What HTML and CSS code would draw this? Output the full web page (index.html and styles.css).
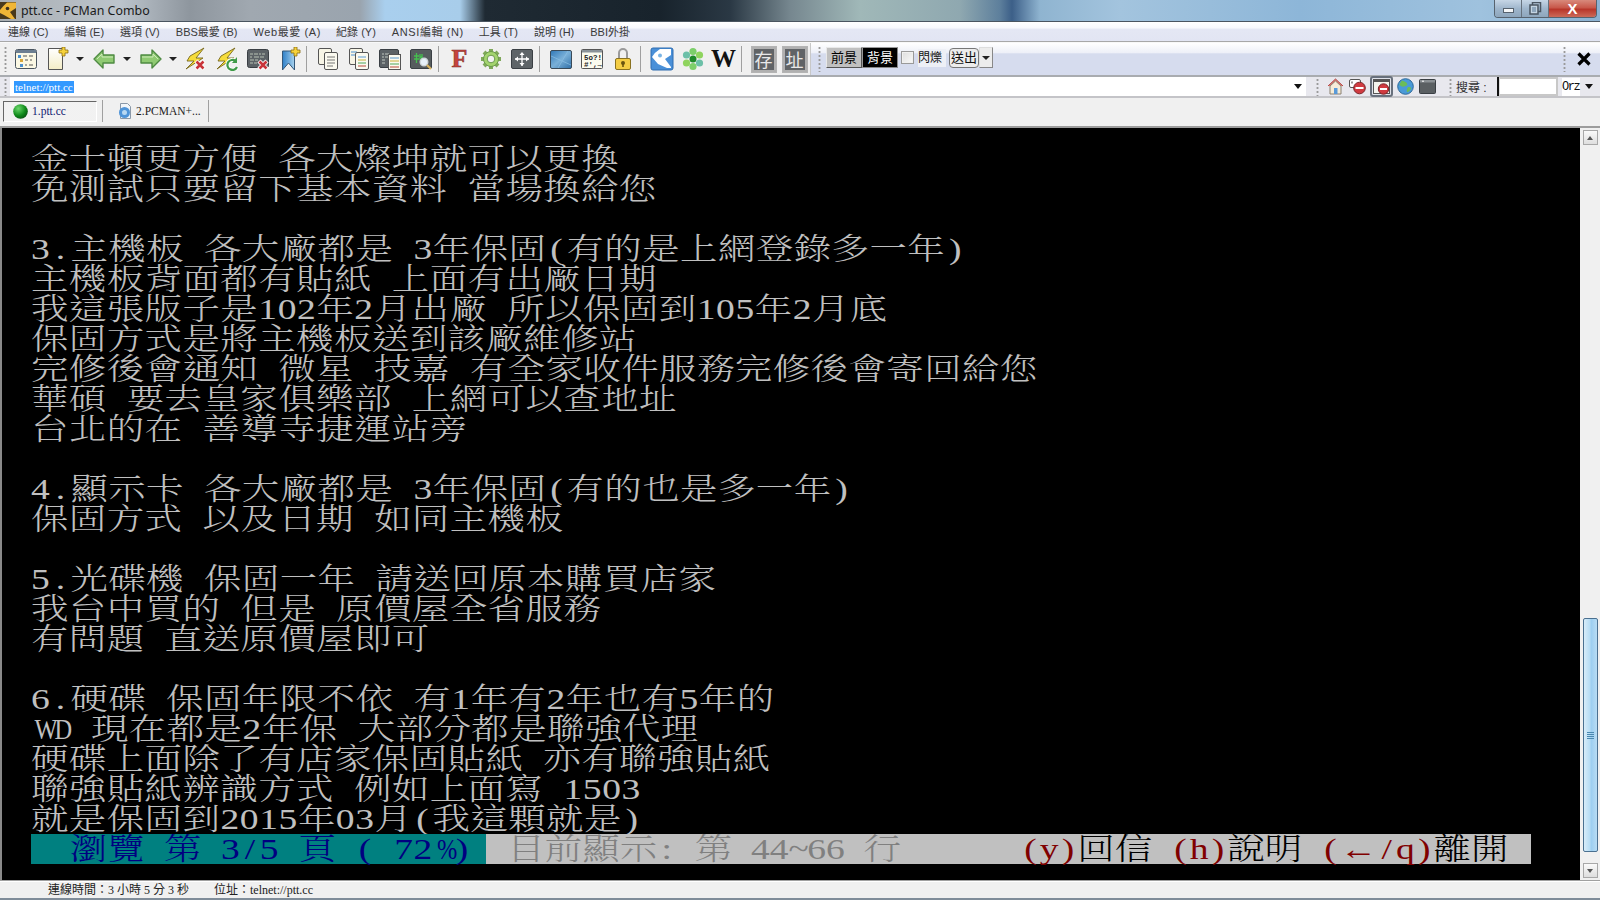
FILE: index.html
```html
<!DOCTYPE html>
<html lang="zh-Hant">
<head>
<meta charset="utf-8">
<title>ptt.cc - PCMan Combo</title>
<link rel="stylesheet" href="styles.css">
</head>
<body>
<div class="app">
  <header class="titlebar">
    <svg class="app-icon" width="16" height="20" viewBox="0 0 16 20"><rect y="1" width="16" height="17" fill="#4a3a1c"/><path d="M0 9Q3 5 7 1.500H16V7L10 11L15 18H11L4 14L0 12Z" fill="#f0b636"/><circle cx="7.500" cy="7.500" r="1.800" fill="#3a3020"/></svg>
    <span class="title">ptt.cc - PCMan Combo</span>
    <div class="winctl">
      <span class="wbtn wmin"><i></i></span>
      <span class="wbtn wmax"><svg width="13" height="13" viewBox="0 0 13 13"><rect x="3.500" y=".5" width="8" height="9" fill="none" stroke="#4a5662" stroke-width="1.500"/><rect x="1" y="3" width="8" height="9" fill="#c4d4e2" stroke="#4a5662" stroke-width="1.500"/><rect x="3" y="5" width="4" height="5" fill="#8ea6bc"/></svg></span>
      <span class="wbtn wclose">X</span>
    </div>
  </header>

  <nav class="menubar">
    <span>連線 (C)</span><span>編輯 (E)</span><span>選項 (V)</span><span>BBS最愛 (B)</span><span class="w">Web最愛 (A)</span><span>紀錄 (Y)</span><span class="w">ANSI編輯 (N)</span><span>工具 (T)</span><span>說明 (H)</span><span>BBI外掛</span>
  </nav>

  <div class="toolrow">
    <div class="tb1">
      <span class="grip"></span>
      <span class="btn"><svg width="24" height="24" viewBox="0 0 24 24"><rect x="1.500" y="2.500" width="21" height="19" rx="2" fill="#fbf8e4" stroke="#4a5560"/><rect x="2" y="3" width="20" height="3" fill="#6d7f91"/><rect x="4" y="8" width="3" height="3" fill="#4a90d0"/><rect x="6" y="12" width="3" height="3" fill="#d9a83a"/><rect x="6" y="17" width="3" height="3" fill="#4a90d0"/><path d="M9 9h4M15 9h4M11 13h3M16 13h2M11 18h2M15 18h4" stroke="#555"/></svg></span>
      <span class="btn"><svg width="24" height="24" viewBox="0 0 24 24"><defs><linearGradient id="pg" x1="0" y1="0" x2="0" y2="1"><stop offset="0" stop-color="#fff"/><stop offset="1" stop-color="#f4edc6"/></linearGradient></defs><path d="M3.500 1.500h14v21h-14z" fill="url(#pg)" stroke="#555"/><path d="M17 0h3v3h3v3h-3v3h-3V6h-3V3h3z" fill="#f6d23c" stroke="#8a6d10" stroke-width=".8"/></svg></span>
      <span class="dd"><i></i></span>
      <span class="btn"><svg width="24" height="24" viewBox="0 0 24 24"><path d="M2 12 11 3v5h11v8H11v5z" fill="#8fca72" stroke="#4e8a42" stroke-width="1.400" stroke-linejoin="round"/><path d="M5 12 10 7v3h11" fill="none" stroke="#cdeab8"/></svg></span>
      <span class="dd"><i></i></span>
      <span class="btn"><svg width="24" height="24" viewBox="0 0 24 24"><path d="M22 12 13 3v5H2v8h11v5z" fill="#8fca72" stroke="#4e8a42" stroke-width="1.400" stroke-linejoin="round"/><path d="M3 10h11V7l5 5" fill="none" stroke="#cdeab8"/></svg></span>
      <span class="dd narrow"><i></i></span>
      <span class="btn"><svg width="24" height="24" viewBox="0 0 24 24"><path d="M20 1 6 9 3 14h7L2 22l17-11h-7l8-10z" fill="#f6dc3a" stroke="#77681e" stroke-width=".9" stroke-linejoin="round"/><path d="m12 14 8 8m0-8-8 8" stroke="#fff" stroke-width="4.500"/><path d="m12.500 14.500 7 7m0-7-7 7" stroke="#c8343a" stroke-width="2.600"/></svg></span>
      <span class="btn"><svg width="24" height="24" viewBox="0 0 24 24"><path d="M20 1 6 9 3 14h7L2 22l17-11h-7l8-10z" fill="#f6dc3a" stroke="#77681e" stroke-width=".9" stroke-linejoin="round"/><path d="M22 20a5 5 0 1 1-1.500-6" fill="none" stroke="#fff" stroke-width="4"/><path d="M22 20a5 5 0 1 1-1.500-6" fill="none" stroke="#3f9a48" stroke-width="2.200"/><path d="m22 10v6h-5z" fill="#3f9a48"/></svg></span>
      <span class="btn"><svg width="24" height="24" viewBox="0 0 24 24"><rect x="1.500" y="2.500" width="21" height="18" rx="2" fill="#5c6266" stroke="#3a3f44"/><path d="M4 7h3m1 0h4m1 0h2m1 0h3M4 10h2m2 0h5m1 0h4M4 13h4m1 0h3M4 16h3m1 0h3" stroke="#b8c2b4"/><path d="m13 14 8 8m0-8-8 8" stroke="#fff" stroke-width="4.500"/><path d="m13.500 14.500 7 7m0-7-7 7" stroke="#c8343a" stroke-width="2.600"/></svg></span>
      <span class="btn"><svg width="24" height="24" viewBox="0 0 24 24"><defs><linearGradient id="bm" x1="0" y1="0" x2="1" y2="0"><stop offset="0" stop-color="#2f80c8"/><stop offset="1" stop-color="#a8d2ee"/></linearGradient></defs><path d="M5.500 4h12v19l-6-7-6 7z" fill="url(#bm)" stroke="#35587a"/><path d="M17 0h3v3h3v3h-3v3h-3V6h-3V3h3z" fill="#f6d23c" stroke="#8a6d10" stroke-width=".8"/></svg></span>
      <span class="sep"></span>
      <span class="btn"><svg width="24" height="24" viewBox="0 0 24 24"><rect x="2.500" y="1.500" width="13" height="16" rx="1.500" fill="#f7f5e6" stroke="#555"/><rect x="8.500" y="5.500" width="13" height="17" rx="1.500" fill="#fbfaf0" stroke="#555"/><path d="M11 10h8M11 13h8M11 16h8M11 19h6" stroke="#777"/></svg></span>
      <span class="btn"><svg width="24" height="24" viewBox="0 0 24 24"><rect x="2.500" y="1.500" width="13" height="16" rx="1.500" fill="#f7f5e6" stroke="#555"/><path d="M4 5h6M4 8h4" stroke="#4a90d0"/><rect x="8.500" y="5.500" width="13" height="17" rx="1.500" fill="#fbfaf0" stroke="#555"/><path d="M11 10h8" stroke="#5a9ad0"/><path d="M11 13h8" stroke="#c9b03a"/><path d="M11 16h8" stroke="#4ea65a"/><path d="M11 19h8" stroke="#b84a3a"/></svg></span>
      <span class="btn"><svg width="24" height="24" viewBox="0 0 24 24"><rect x="1.500" y="2.500" width="19" height="18" rx="1.500" fill="#5c6266" stroke="#3a3f44"/><path d="M4 7h2m1 0h4M4 10h2m1 0h3M4 13h3M4 16h3" stroke="#c0c8c0"/><rect x="10.500" y="7.500" width="12" height="15" fill="#fbfaf0" stroke="#555"/><path d="M12 11h9" stroke="#5a9ad0"/><path d="M12 14h9" stroke="#c9b03a"/><path d="M12 17h9" stroke="#4ea65a"/><path d="M12 20h9" stroke="#b84a3a"/></svg></span>
      <span class="btn"><svg width="24" height="24" viewBox="0 0 24 24"><rect x="1.500" y="2.500" width="21" height="19" rx="1.500" fill="#565c5e" stroke="#3a3f44"/><path d="M5 9h5M7.500 6v10M11 7v6m2-6v6m-2-3h2M5 12h5" stroke="#45c04e" stroke-width="1.300"/><circle cx="15" cy="15" r="3.800" fill="#e8f2fa" stroke="#cfd6da" stroke-width="1.400"/><path d="m18 18 4 4" stroke="#d8b460" stroke-width="2.200"/></svg></span>
      <span class="sep"></span>
      <span class="btn"><span class="ico-f">F</span></span>
      <span class="btn"><svg width="24" height="24" viewBox="0 0 24 24"><path d="M12 2v20M2 12h20M5 5l14 14M19 5 5 19" stroke="#7fa85a" stroke-width="4"/><circle cx="12" cy="12" r="7.500" fill="#a3d46e" stroke="#6b9a4c"/><circle cx="12" cy="12" r="3.800" fill="#f2f2f2" stroke="#6b9a4c"/></svg></span>
      <span class="btn"><svg width="24" height="24" viewBox="0 0 24 24"><rect x="1.500" y="2.500" width="21" height="19" rx="1.500" fill="#5e6468" stroke="#3a3f44"/><path d="M5 12h14M12 6v13" stroke="#fff" stroke-width="1.300"/><path d="m5 12 3-2.500v5zm14 0-3-2.500v5zM12 5l-2.500 3h5zm0 14-2.500-3h5z" fill="#fff"/></svg></span>
      <span class="sep"></span>
      <span class="btn"><svg width="24" height="24" viewBox="0 0 24 24"><defs><linearGradient id="bw" x1="0" y1="0" x2="1" y2="1"><stop offset="0" stop-color="#2f78b8"/><stop offset=".5" stop-color="#7ab0d8"/><stop offset="1" stop-color="#2f6fa8"/></linearGradient></defs><rect x="1.500" y="3.500" width="21" height="18" rx="1.500" fill="url(#bw)" stroke="#3a4a58"/><path d="M2 9 22 18M19 4 9 21" stroke="#8cc0e4" opacity=".7"/></svg></span>
      <span class="btn"><svg width="24" height="24" viewBox="0 0 24 24"><rect x="1.500" y="2.500" width="21" height="19" rx="1" fill="#fbfbee" stroke="#555"/><rect x="2" y="3" width="20" height="2.500" fill="#8a9298"/><text class="ico-c" x="4" y="12.500">5o?!</text><text class="ico-c" x="4" y="19.500">#',→</text></svg></span>
      <span class="btn"><svg width="24" height="24" viewBox="0 0 24 24"><path d="M8 11V6a4 4 0 0 1 8 0v5" fill="none" stroke="#9a9a9a" stroke-width="2"/><rect x="4.500" y="11.500" width="15" height="11" rx="1.500" fill="#f4cd44" stroke="#8a7220"/><circle cx="12" cy="16" r="2" fill="#6a5410"/><path d="M12 16v4" stroke="#6a5410" stroke-width="1.600"/></svg></span>
      <span class="sep"></span>
      <span class="btn"><svg width="24" height="24" viewBox="0 0 24 24"><rect x="1" y="1" width="22" height="22" rx="2" fill="#4a90d8" stroke="#2f6db0"/><path d="M2 10Q5 5 10 2H21V8L15 12L21 20V21H17L8 17Z" fill="#fff"/><circle cx="10" cy="8.500" r="2" fill="#7ab4e4"/></svg></span>
      <span class="btn"><svg width="24" height="24" viewBox="0 0 24 24"><g fill="#7dcf6a"><circle cx="12" cy="4.500" r="3.600"/><circle cx="12" cy="19.500" r="3.600"/></g><g fill="#6cc0a8"><circle cx="5.500" cy="8" r="3.600"/><circle cx="18.500" cy="16" r="3.600"/></g><g fill="#8fd45e"><circle cx="18.500" cy="8" r="3.600"/><circle cx="5.500" cy="16" r="3.600"/></g><circle cx="12" cy="12" r="3.500" fill="#1e8a2a"/></svg></span>
      <span class="btn"><span class="ico-w">W</span></span>
      <span class="sep s7"></span>
      <span class="btn sq"><b>存</b></span>
      <span class="btn sq"><b>址</b></span>
    </div>
    <div class="tb2">
      <span class="grip"></span>
      <span class="cbtn fg">前景</span>
      <span class="cbtn bg">背景</span>
      <span class="check"></span>
      <span class="blink">閃爍</span>
      <span class="send">送出</span>
      <span class="send-dd"><i></i></span>
      <span class="fill"></span>
      <span class="grip"></span>
      <svg class="closex" width="16" height="16" viewBox="0 0 16 16"><path d="m2.500 2.500 11 11m0-11-11 11" stroke="#000" stroke-width="3.200"/></svg>
    </div>
  </div>

  <div class="addrrow">
    <span class="grip"></span>
    <div class="addr"><span class="sel">telnet://ptt.cc</span><i class="arrow"></i></div>
    <span class="grip g2"></span>
    <div class="navicons">
      <svg width="17" height="17" viewBox="0 0 17 17"><path d="M1 8 8.500 1 16 8" fill="#e27a72" stroke="#b04a48" stroke-linejoin="round"/><path d="M3 8v8h11V8L8.500 3z" fill="#f6ecd8" stroke="#8a8070"/><rect x="7" y="10" width="3.500" height="6" fill="#5a9ad8"/></svg>
      <svg width="17" height="17" viewBox="0 0 17 17"><rect x=".5" y="1.500" width="11" height="8" rx="1.500" fill="#fff" stroke="#555"/><path d="M3 3.500v2" stroke="#333"/><circle cx="10.500" cy="10" r="5.800" fill="#d03a40" stroke="#7a2428"/><rect x="6.500" y="9" width="8" height="2" fill="#fff"/></svg>
      <span class="nav-on"><svg width="17" height="17" viewBox="0 0 17 17"><rect x=".5" y="1.500" width="16" height="14" fill="#f4f4ee" stroke="#555"/><rect x="1" y="2" width="15" height="2" fill="#555"/><circle cx="10.500" cy="11" r="5.200" fill="#d03a40" stroke="#7a2428"/><rect x="7" y="10" width="7" height="2" fill="#fff"/></svg></span>
      <svg width="17" height="17" viewBox="0 0 17 17"><circle cx="8.500" cy="8.500" r="7.800" fill="#4a9ad8" stroke="#2f6a9a"/><path d="M5 2.500c2 1 4 1 5 3s-1 2-3 3-3-1-4-1 0-3 2-5zM11 9c2 0 3 0 3 1s-1 3-3 4-1-4 0-5z" fill="#6cbc58"/></svg>
      <svg width="17" height="17" viewBox="0 0 17 17"><rect x=".5" y="1.500" width="16" height="14" rx="1" fill="#5a5f62" stroke="#3a3f44"/><rect x="1" y="2" width="15" height="2.500" fill="#8a9094"/><path d="M3 3.200h2" stroke="#fff"/></svg>
    </div>
    <span class="grip g3"></span>
    <span class="search-label">搜尋 :</span>
    <span class="search-box"></span>
    <span class="engine">Orz</span>
    <i class="arrow a2"></i>
  </div>

  <div class="tabrow">
    <div class="tab active">
      <svg width="15" height="15" viewBox="0 0 15 15"><defs><radialGradient id="ball" cx=".35" cy=".3" r=".8"><stop offset="0" stop-color="#6cd86c"/><stop offset=".6" stop-color="#0f8a1a"/><stop offset="1" stop-color="#064a10"/></radialGradient></defs><circle cx="7.500" cy="7.500" r="7.300" fill="url(#ball)"/></svg>
      <span>1.ptt.cc</span>
    </div>
    <span class="tabsep"></span>
    <div class="tab second">
      <svg width="15" height="16" viewBox="0 0 15 16"><path d="M2.500.5h7l3 3v12h-10z" fill="#f2f6fa" stroke="#8a98a8"/><circle cx="6.500" cy="9.500" r="5.500" fill="#4f94d8"/><circle cx="6.500" cy="9.500" r="2.500" fill="#b8d8f2"/></svg>
      <span>2.PCMAN+...</span>
    </div>
    <span class="tabsep"></span>
  </div>

  <div class="termwrap">
    <main class="terminal">
      <div class="screen">
<div class="r">金士頓更方便 各大燦坤就可以更換</div>
<div class="r">免測試只要留下基本資料 當場換給您</div>
<div class="r"> </div>
<div class="r"><b>3</b><i>.</i>主機板 各大廠都是 <b>3</b>年保固<i>(</i>有的是上網登錄多一年<i>)</i></div>
<div class="r">主機板背面都有貼紙 上面有出廠日期</div>
<div class="r">我這張版子是<b>102</b>年<b>2</b>月出廠 所以保固到<b>105</b>年<b>2</b>月底</div>
<div class="r">保固方式是將主機板送到該廠維修站</div>
<div class="r">完修後會通知 微星 技嘉 有全家收件服務完修後會寄回給您</div>
<div class="r">華碩 要去皇家俱樂部 上網可以查地址</div>
<div class="r">台北的在 善導寺捷運站旁</div>
<div class="r"> </div>
<div class="r"><b>4</b><i>.</i>顯示卡 各大廠都是 <b>3</b>年保固<i>(</i>有的也是多一年<i>)</i></div>
<div class="r">保固方式 以及日期 如同主機板</div>
<div class="r"> </div>
<div class="r"><b>5</b><i>.</i>光碟機 保固一年 請送回原本購買店家</div>
<div class="r">我台中買的 但是 原價屋全省服務</div>
<div class="r">有問題 直送原價屋即可</div>
<div class="r"> </div>
<div class="r"><b>6</b><i>.</i>硬碟 保固年限不依 有<b>1</b>年有<b>2</b>年也有<b>5</b>年的</div>
<div class="r"><i class="n">W</i><i class="n">D</i> 現在都是<b>2</b>年保 大部分都是聯強代理</div>
<div class="r">硬碟上面除了有店家保固貼紙 亦有聯強貼紙</div>
<div class="r">聯強貼紙辨識方式 例如上面寫 <b>1503</b></div>
<div class="r">就是保固到<b>2015</b>年<b>03</b>月<i>(</i>我這顆就是<i>)</i></div>
<div class="r status"><span class="st-a">  瀏覽 第 <b>3</b><i>/</i><b>5</b> 頁 <i>(</i> <b>72</b><i class="n">%</i><i>)</i></span><span class="st-b">目前顯示<i>:</i> 第 <b>44</b><i>~</i><b>66</b> 行</span><span class="st-c"><u><i>(</i><i>y</i><i>)</i></u>回信 <u><i>(</i><i>h</i><i>)</i></u>說明 <u><i>(</i>←<i>/</i><i>q</i><i>)</i></u>離開</span></div>
      </div>
    </main>
    <aside class="scrollbar">
      <span class="sb-btn up"></span>
      <span class="sb-thumb"><i></i></span>
      <span class="sb-btn down"></span>
    </aside>
  </div>

  <footer class="statusbar">
    <span class="s1">連線時間：3 小時 5 分 3 秒</span>
    <span class="s2">位址：telnet://ptt.cc</span>
  </footer>
  <div class="taskstrip"></div>
</div>
</body>
</html>
```
FILE: styles.css
```css
* { box-sizing: border-box; }
html, body { margin: 0; padding: 0; height: 100%; overflow: hidden; }
body { font-family: "Liberation Sans", "Noto Sans CJK TC", sans-serif; font-size: 12px; color: #333; background: #f0f0f0; }
.app { width: 1600px; height: 900px; display: flex; flex-direction: column; }

/* title bar */
.titlebar {
  height: 22px; flex: none; display: flex; align-items: center; position: relative;
  border-bottom: 1px solid #4a5560;
  background: linear-gradient(90deg, #a9aeb2 0, #bcc4cc 120px, #8e969e 190px, #a0a8b0 250px, #9aa4ae 360px, #a9cfee 385px, #a8cdea 460px, #1f2a33 485px, #18232c 660px, #2a3844 730px, #76878f 790px, #a0b8b8 860px, #8fa8b0 960px, #5d7f9c 1000px, #3c5f88 1012px, #8fb4d0 1040px, #a3c4de 1120px, #8db6d8 1300px, #9fc2de 1480px, #8cb2d2 1600px);
}
.app-icon { flex: none; }
.title { margin-left: 5px; font: 12.400px/20px "Noto Sans", sans-serif; color: #1a1a1a; white-space: nowrap; }
.winctl { margin-left: auto; margin-right: 3px; align-self: flex-start; display: flex; height: 18px; border: 1px solid #56626e; border-top: 0; border-radius: 0 0 4px 4px; overflow: hidden; }
.wbtn { display: flex; align-items: center; justify-content: center; width: 27px; background: linear-gradient(#c6d6e6 0, #9fb6cc 50%, #8ea6bc 100%); border-right: 1px solid #66727e; }
.wmin i { width: 11px; height: 5px; margin-top: 3px; background: #f4f6f8; border: 1px solid #56626e; }
.wclose { width: 47px; border: 0; background: linear-gradient(#d88a7c 0, #c8584a 45%, #b8362a 55%, #cc6a58 100%); color: #fff; font: bold 15px/16px "Liberation Sans", sans-serif; }

/* menu */
.menubar {
  height: 20px; flex: none; display: flex; align-items: center; gap: 16px; padding: 0 0 2px 8px;
  background: linear-gradient(#fff 0, #f8f9fd 30%, #e4e7f4 40%, #e2e5f3 100%);
  border-bottom: 1px solid #a8a8a8; color: #3a3a3a; font-size: 11px; white-space: nowrap;
}
.menubar .w { letter-spacing: .6px; margin-right: -1px; }

/* toolbars */
.toolrow { height: 35px; flex: none; display: flex; border-bottom: 2px solid #a9acb0; border-top: 1px solid #f8f8f8; background: linear-gradient(#fff 0, #eef0f8 30%, #d6dcee 34%, #d6dcee 100%); }
.tb1 { display: flex; align-items: center; width: 810px; flex: none; background: #f0f0f0; padding-left: 4px; }
.tb1 > .grip { margin-right: 3px; }
.tb2 { flex: 1; display: flex; align-items: center; border-left: 1px solid #c8c8c8; padding-left: 7px; }
.grip { flex: none; width: 3px; height: 26px; background-image: radial-gradient(circle, #9a9a9a 1px, transparent 1.200px); background-size: 3px 4px; }
.btn { flex: none; width: 31px; height: 26px; display: flex; align-items: center; justify-content: center; }
.dd { flex: none; width: 16px; height: 26px; display: flex; align-items: center; justify-content: center; }
.dd.narrow { width: 14px; }
.dd i, .send-dd i { width: 0; height: 0; border: 4px solid transparent; border-top: 4px solid #222; border-bottom: 0; }
.sep { flex: none; width: 1px; height: 26px; margin: 0 5px 0 2px; background: #a0a0a0; }
.sep.s7 { margin-right: 6px; }
.sq b { width: 24px; height: 25px; display: flex; align-items: center; justify-content: center; background: #606366; border: 2px solid #b0b0b0; outline: 1px solid #b4b4b4; color: #e8e8e8; font: 400 18px/1 "Noto Sans CJK TC", sans-serif; }
.ico-f { font: bold 26px/26px "Liberation Serif", serif; color: #c8443c; -webkit-text-stroke: .5px #7a2a24; }
.ico-w { font: bold 25px/26px "Liberation Serif", serif; color: #111; }
.ico-c { font: bold 7.500px "Liberation Mono", monospace; fill: #222; }
.cbtn { flex: none; width: 36px; height: 21px; margin-bottom: 3px; display: flex; align-items: center; justify-content: center; font-size: 13px; line-height: 17px; border: 1px solid; border-color: #e8e8e8 #555 #555 #e8e8e8; }
.cbtn.fg { margin-left: 5px; background: #c0c0c0; color: #000; }
.cbtn.bg { background: #000; color: #fff; margin-left: 0; border-color: #999 #888 #888 #999; }
.check { flex: none; width: 13px; height: 13px; margin: 0 0 3px 3px; background: linear-gradient(135deg, #ddd, #fafafa); border: 1px solid #9a9a9a; box-shadow: inset 0 0 0 1px #f0f0f0; }
.blink { flex: none; margin: 0 0 3px 4px; width: 28px; font-size: 12px; color: #111; background: #eef0f6; line-height: 18px; }
.send { flex: none; margin: 0 0 3px 3px; width: 30px; height: 20px; display: flex; align-items: center; justify-content: center; font-size: 13px; line-height: 17px; color: #111; background: #ececec; border: 1px solid #777; border-radius: 4px; }
.send-dd { flex: none; width: 14px; height: 21px; margin-bottom: 3px; display: flex; align-items: center; justify-content: center; background: #ececec; border: 1px solid; border-color: #ddd #888 #888 #ddd; }
.fill { flex: 1; }
.closex { flex: none; margin: 0 8px 0 10px; }

/* address row */
.addrrow { height: 21px; flex: none; display: flex; align-items: center; background: #e8e8ee; border-bottom: 2px solid #c4c4c8; padding-left: 4px; }
.addrrow > .grip { height: 18px; }
.addr { margin-left: 3px; width: 1296px; height: 19px; flex: none; background: #fff; display: flex; align-items: center; padding-left: 4px; position: relative; }
.sel { background: #3399ff; color: #fff; font: 11px/12px "Liberation Serif", serif; padding: 0 1px; white-space: nowrap; }
.arrow { width: 0; height: 0; border: 4.500px solid transparent; border-top: 5px solid #111; border-bottom: 0; }
.addr .arrow { margin-left: auto; margin-right: 4px; }
.addrrow .g2 { margin-left: 10px; }
.navicons { display: flex; align-items: center; gap: 5px; width: 130px; padding-left: 8px; }
.navicons svg { flex: none; }
.nav-on { flex: none; width: 23px; height: 21px; margin: 0 -1px; display: flex; align-items: center; justify-content: center; background: #dfe2ea; border: 2px solid #68707c; border-radius: 3px; }
.search-label { flex: none; width: 41px; margin-left: 4px; color: #333; font-size: 12px; white-space: nowrap; }
.search-box { flex: none; width: 59px; height: 19px; margin-left: 2px; background: #fff; border: 2px solid #c8c8c8; border-left: 1px solid #ddd; box-shadow: -2px 0 0 0 #111; }
.engine { flex: none; margin-left: 4px; width: 18px; height: 18px; background: #fff; color: #111; font: 12px/18px "Liberation Mono", monospace; letter-spacing: -1.500px; }
.a2 { flex: none; margin-left: 5px; }

/* tabs */
.tabrow { height: 30px; flex: none; display: flex; align-items: center; padding: 0 0 2px 3px; background: #f0f0f0; border-bottom: 2px solid #9c9c9c; }
.tab { display: flex; align-items: center; flex: none; font: 11.500px/14px "Liberation Serif", serif; white-space: nowrap; }
.tab.active { width: 94px; height: 21px; padding-left: 9px; gap: 4px; color: #102070; border: 1px solid; border-color: #666 #fff #fff #666; background-color: #f8f8f8; background-image: radial-gradient(circle, #e4e4e4 .5px, transparent .8px); background-size: 2px 2px; }
.tab.second { width: 105px; padding-left: 15px; gap: 3px; color: #222; }
.tabsep { flex: none; width: 1px; height: 22px; margin-left: 5px; background: #a0a0a0; }
.tab.second + .tabsep { margin-left: 0; }

/* terminal */
.termwrap { flex: 1; min-height: 0; display: flex; }
.terminal { flex: 1; background: #000; border-left: 2px solid #8a8a8a; padding: 16px 0 0 29px; overflow: hidden; }
.screen { width: 1200px; transform: scaleX(1.25); transform-origin: 0 0; }
.r { height: 30px; white-space: pre; font: 300 30px/30px "Liberation Serif", "Noto Serif CJK TC", "AR PL UMing TW", "Noto Sans CJK TC", serif; letter-spacing: .3px; word-spacing: 8.200px; color: #c0c0c0; }
.r i { display: inline-block; width: 16px; text-align: center; font-style: normal; letter-spacing: 0; word-spacing: 0; }
.r i.n { transform: scaleX(.65); }
.r b { font-weight: 300; letter-spacing: .5px; }
.status { display: flex; color: #808080; }
.st-a { flex: none; width: 364px; background: #008080; color: #000080; letter-spacing: 0; word-spacing: 8px; }
.st-a i { width: 15.500px; }
.st-b { flex: none; width: 428px; background: #c0c0c0; padding-left: 17px; letter-spacing: 0; word-spacing: 7.500px; }
.st-c { flex: 1; background: #c0c0c0; color: #000; letter-spacing: 0; word-spacing: 7.500px; }
.st-b i, .st-c i { width: 15px; }
.st-b b { letter-spacing: 0; }
.st-c u { color: #800000; text-decoration: none; }

/* scrollbar */
.scrollbar { flex: none; width: 20px; background: #f0f0f0; display: flex; flex-direction: column; align-items: center; padding: 2px 0 0 0; }
.sb-btn { flex: none; width: 15px; height: 15px; background: linear-gradient(#fafafa, #dedede); border: 1px solid #a8a8a8; display: flex; align-items: center; justify-content: center; }
.sb-btn::before { content: ""; width: 0; height: 0; border: 3.500px solid transparent; }
.up::before { border-bottom: 4px solid #555; border-top: 0; }
.down::before { border-top: 4px solid #555; border-bottom: 0; }
.sb-thumb { flex: none; margin-top: 473px; width: 15px; height: 234px; background: linear-gradient(90deg, #d8ecf8 0, #b6dcf4 45%, #9ccef0 55%, #b8dcf4 100%); border: 1px solid #4a7090; border-radius: 2px; display: flex; align-items: center; justify-content: center; }
.sb-thumb i { width: 7px; height: 7px; background: repeating-linear-gradient(#4a88b0 0, #4a88b0 1px, transparent 1px, transparent 2px); }
.down { margin-top: 11px; }

/* status bar */
.statusbar { height: 18px; flex: none; display: flex; align-items: center; background: #f0f0f0; border-top: 1px solid #a0a0a0; font: 12px/14px "Liberation Serif", "Noto Sans CJK TC", serif; color: #222; box-shadow: inset 0 1px 0 #fff; }
.s1 { margin-left: 48px; width: 166px; flex: none; white-space: nowrap; }
.s2 { white-space: nowrap; }
.taskstrip { height: 2px; flex: none; background: #7f8c99; }
```
